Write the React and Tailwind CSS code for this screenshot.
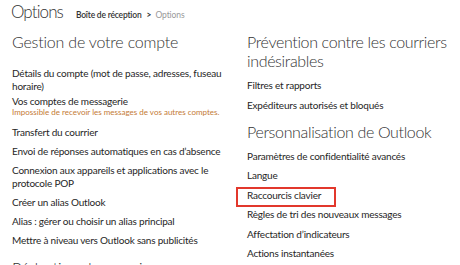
import React from "react";

const font = { fontFamily: 'Lato, "Open Sans", sans-serif' };

function Item({ children, className = "" }) {
  return <div className={"text-[10px] leading-[13px] tracking-[-0.2px] text-[#262626] " + className}>{children}</div>;
}

function Heading({ children, className = "" }) {
  return <div className={"text-[16px] font-light leading-[19px] tracking-[-0.2px] text-[#333] " + className}>{children}</div>;
}

export default function App() {
  return (
    <div className="w-[460px] h-[265px] overflow-hidden bg-white" style={font}>
      <div className="flex items-baseline pl-[11px] pt-[2px] h-[20px]">
        <span className="text-[17px] font-light leading-[20px] tracking-[-0.9px] text-[#333]">Options</span>
        <span className="ml-[13px] text-[8.5px] font-semibold tracking-[-0.2px] text-[#333]">Boîte de réception</span>
        <span className="ml-[5px] text-[8.5px] font-bold text-[#333]">&gt;</span>
        <span className="ml-[4px] text-[8.5px] tracking-[-0.1px] text-[#999]">Options</span>
      </div>
      <div className="grid grid-cols-[235px_1fr] pt-[11.5px]">
        <div className="flex flex-col pl-[12px] pr-[10px]">
          <Heading>Gestion de votre compte</Heading>
          <Item className="mt-[16px]">Détails du compte (mot de passe, adresses, fuseau horaire)</Item>
          <Item className="mt-[2px] leading-[12px]">Vos comptes de messagerie</Item>
          <div className="text-[8px] leading-[9px] tracking-[0px] text-[#c47a35]">Impossible de recevoir les messages de vos autres comptes.</div>
          <div className="mt-[9px] flex flex-col gap-[6px]">
            <Item>Transfert du courrier</Item>
            <Item>Envoi de réponses automatiques en cas d’absence</Item>
            <Item>Connexion aux appareils et applications avec le protocole POP</Item>
            <Item>Créer un alias Outlook</Item>
            <Item>Alias : gérer ou choisir un alias principal</Item>
            <Item>Mettre à niveau vers Outlook sans publicités</Item>
          </div>
          <Heading className="mt-[11px]">Rédaction de courriers</Heading>
        </div>
        <div className="flex flex-col pl-[12px] pr-[4px]">
          <Heading className="text-[15px] tracking-[-0.35px]">Prévention contre les courriers indésirables</Heading>
          <div className="mt-[9px] flex flex-col gap-[7px]">
            <Item>Filtres et rapports</Item>
            <Item>Expéditeurs autorisés et bloqués</Item>
          </div>
          <Heading className="mt-[10px] text-[15px] tracking-[-0.35px]">Personnalisation de Outlook</Heading>
          <div className="mt-[9px] flex flex-col gap-[6.5px]">
            <Item>Paramètres de confidentialité avancés</Item>
            <Item>Langue</Item>
            <Item className="relative">
              Raccourcis clavier
              <div className="absolute left-[-11px] top-[-2px] w-[100px] h-[20px] border-2 border-[#e2382c]" />
            </Item>
            <Item>Règles de tri des nouveaux messages</Item>
            <Item>Affectation d’indicateurs</Item>
            <Item>Actions instantanées</Item>
          </div>
        </div>
      </div>
    </div>
  );
}
